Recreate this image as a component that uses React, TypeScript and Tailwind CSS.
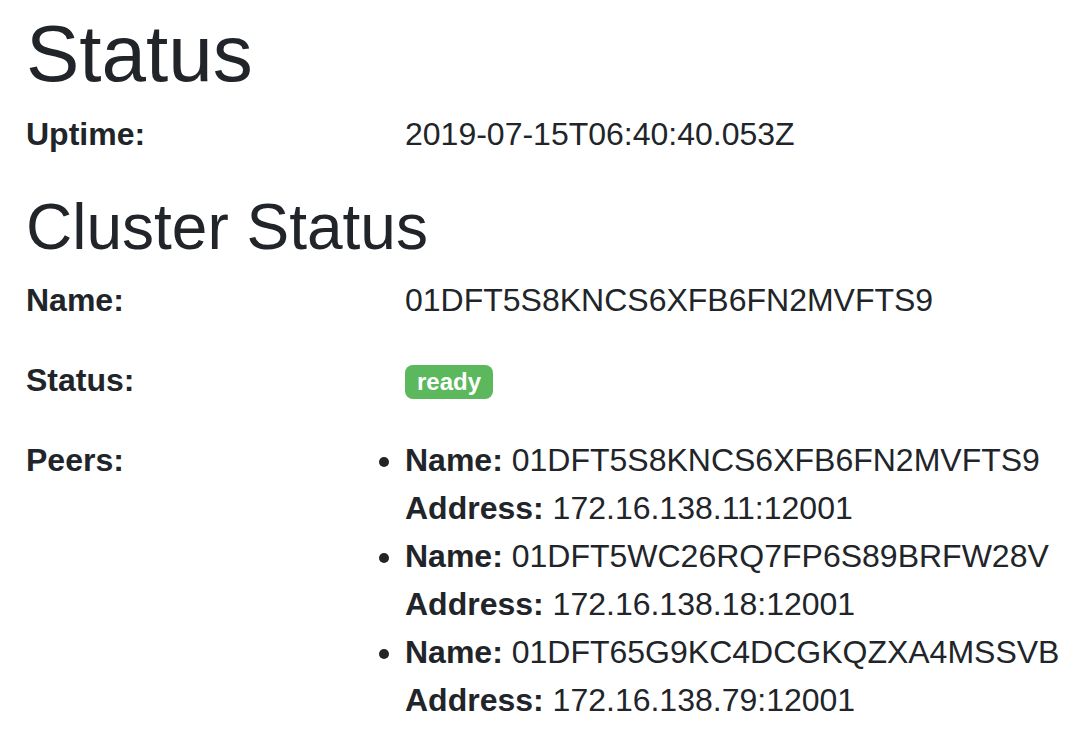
const peers = [
  { name: '01DFT5S8KNCS6XFB6FN2MVFTS9', address: '172.16.138.11:12001' },
  { name: '01DFT5WC26RQ7FP6S89BRFW28V', address: '172.16.138.18:12001' },
  { name: '01DFT65G9KC4DCGKQZXA4MSSVB', address: '172.16.138.79:12001' },
]

function Row({ label, children }: { label: string; children: React.ReactNode }) {
  return (
    <div className="grid grid-cols-[379px_1fr] mb-8">
      <b className="font-bold">{label}</b>
      <div>{children}</div>
    </div>
  )
}

export default function App() {
  return (
    <div className="min-h-screen bg-white pl-[26px] pt-[6px] text-[32px] leading-[48px] text-[#212529] font-['Liberation_Sans',Arial,sans-serif]">
      <h1 className="text-[80px] leading-[96px] mb-[8px] font-normal">Status</h1>
      <Row label="Uptime:">2019-07-15T06:40:40.053Z</Row>

      <h2 className="text-[64px] leading-[76.8px] mb-[10px] -mt-[0.6px] font-normal">Cluster Status</h2>
      <Row label="Name:">01DFT5S8KNCS6XFB6FN2MVFTS9</Row>
      <Row label="Status:">
        <span className="inline-block rounded-[8px] bg-[#5cb85c] px-[12px] text-[24px] leading-[34px] font-bold text-white align-[1px]">
          ready
        </span>
      </Row>
      <Row label="Peers:">
        <ul className="list-disc list-outside">
          {peers.map((p) => (
            <li key={p.name}>
              <b>Name:</b> {p.name}
              <br />
              <b>Address:</b> {p.address}
            </li>
          ))}
        </ul>
      </Row>
    </div>
  )
}
